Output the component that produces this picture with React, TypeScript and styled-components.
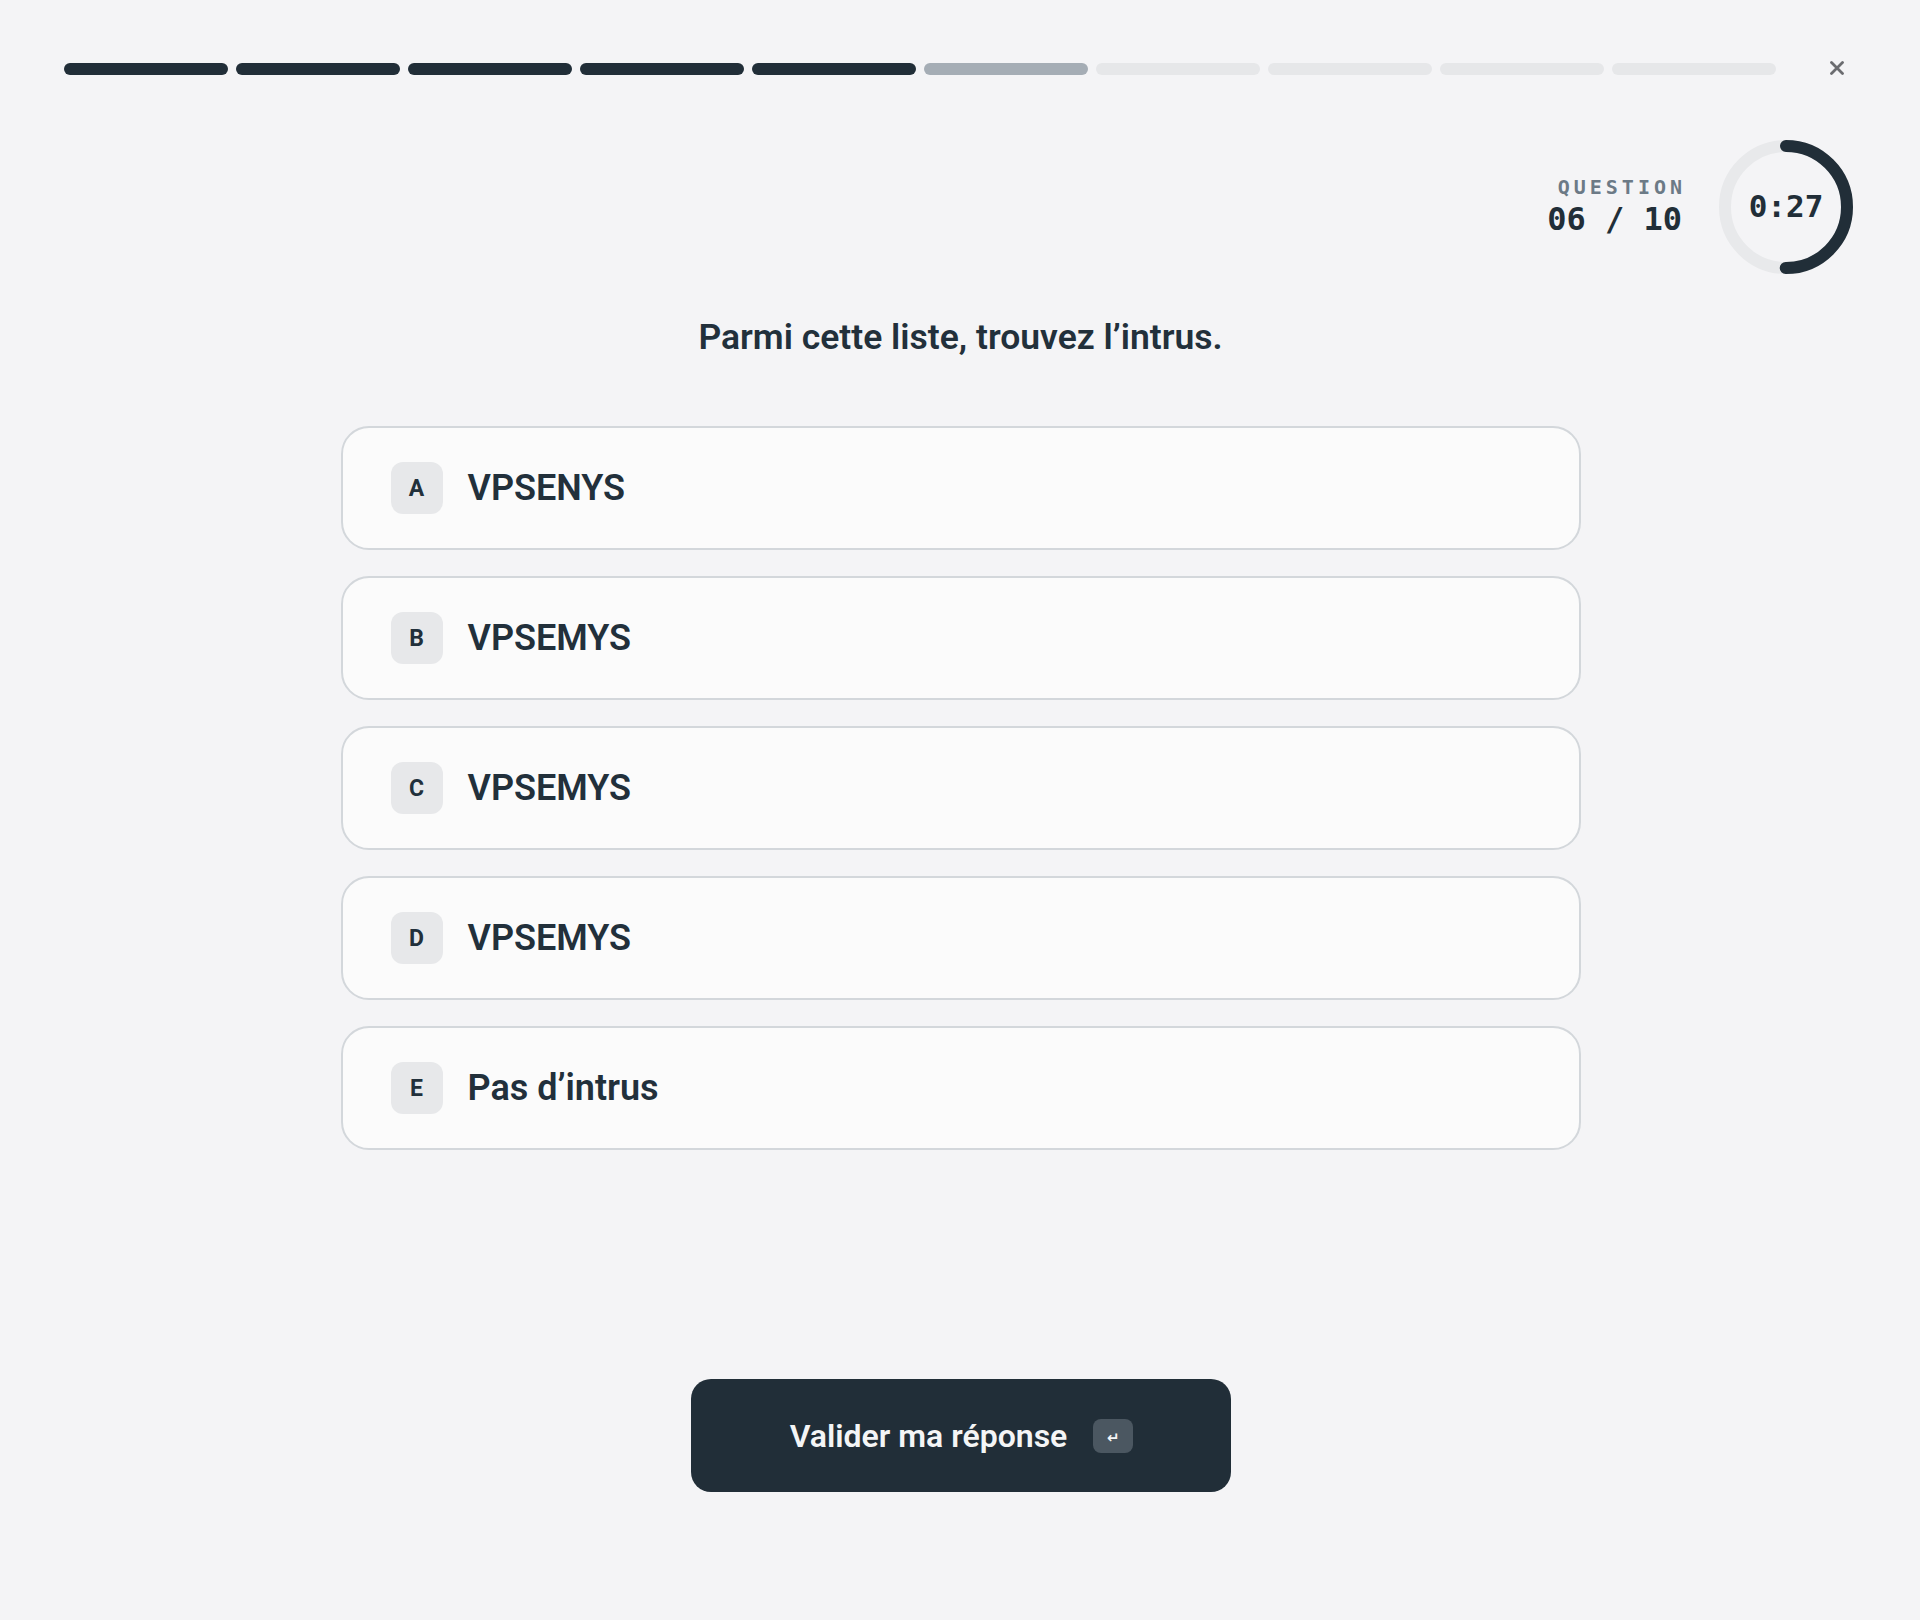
import React from "react";
import styled, { createGlobalStyle } from "styled-components";

const INK = "#212e38";

const GlobalStyle = createGlobalStyle`
  html, body {
    margin: 0;
    padding: 0;
    background: #f4f4f6;
  }
  body {
    font-family: Roboto, "Liberation Sans", Arial, sans-serif;
    color: ${INK};
  }
  * { box-sizing: border-box; }
`;

const Page = styled.div`
  min-height: 1620px;
  display: flex;
  flex-direction: column;
  padding: 48px 63px 0 64px;
`;

const Header = styled.header`
  display: flex;
  align-items: center;
  gap: 41px;
  height: 40px;
`;

const Progress = styled.div`
  flex: 1;
  display: flex;
  gap: 8px;
  padding-top: 2px;
`;

const Segment = styled.div<{ $state: "done" | "current" | "todo" }>`
  flex: 1;
  height: 12px;
  border-radius: 6px;
  background: ${(p) =>
    p.$state === "done" ? INK : p.$state === "current" ? "#a5adb5" : "#e6e7e9"};
`;

const CloseButton = styled.button`
  width: 40px;
  height: 40px;
  border: none;
  background: transparent;
  padding: 0;
  display: flex;
  align-items: center;
  justify-content: center;
  cursor: pointer;
  color: #6b6c70;
`;

const MetaRow = styled.div`
  display: flex;
  justify-content: flex-end;
  align-items: center;
  gap: 36px;
  margin-top: 51px;
  padding-right: 3px;
`;

const Counter = styled.div`
  display: flex;
  flex-direction: column;
  align-items: flex-end;
  gap: 4px;
  font-family: "DejaVu Sans Mono", "Liberation Mono", monospace;
`;

const CounterLabel = styled.div`
  font-size: 20px;
  line-height: 20px;
  font-weight: 700;
  letter-spacing: 4px;
  margin-right: -4px;
  color: #6c7a86;
`;

const CounterValue = styled.div`
  font-size: 32px;
  line-height: 36px;
  font-weight: 700;
  color: ${INK};
  white-space: pre;
`;

const Timer = styled.div`
  display: grid;
  width: 136px;
  height: 136px;
  & > * {
    grid-area: 1 / 1;
  }
`;

const TimerText = styled.div`
  display: flex;
  align-items: center;
  justify-content: center;
  font-family: "DejaVu Sans Mono", "Liberation Mono", monospace;
  font-size: 31px;
  font-weight: 700;
  color: ${INK};
  padding-bottom: 2px;
`;

const Title = styled.h1`
  margin: 41px 0 0;
  text-align: center;
  font-size: 35.5px;
  line-height: 42px;
  font-weight: 600;
  color: #22303b;
`;

const Options = styled.div`
  width: 1240px;
  margin: 68px auto 0;
  display: flex;
  flex-direction: column;
  gap: 26px;
`;

const Option = styled.button`
  height: 124px;
  display: flex;
  align-items: center;
  gap: 25px;
  padding: 0 0 0 48px;
  background: #fbfbfb;
  border: 2px solid #d3d7db;
  border-radius: 28px;
  font-family: inherit;
  text-align: left;
  cursor: pointer;
`;

const Letter = styled.span`
  width: 52px;
  height: 52px;
  border-radius: 12px;
  background: #e7e8ea;
  display: flex;
  align-items: center;
  justify-content: center;
  font-size: 23px;
  font-weight: 700;
  color: #22303b;
`;

const OptionText = styled.span`
  font-size: 36px;
  font-weight: 600;
  color: #22303b;
`;

const Footer = styled.div`
  display: flex;
  justify-content: center;
  margin-top: 229px;
`;

const Submit = styled.button`
  width: 540px;
  height: 113px;
  border: none;
  border-radius: 20px;
  background: ${INK};
  display: flex;
  align-items: center;
  justify-content: center;
  gap: 26px;
  font-family: inherit;
  font-size: 32px;
  font-weight: 600;
  color: #f4f5f6;
  cursor: pointer;
  padding: 0 0 0 2px;
`;

const Kbd = styled.span`
  width: 40px;
  height: 34px;
  border-radius: 8px;
  background: #4b5761;
  display: flex;
  align-items: center;
  justify-content: center;
  font-family: "DejaVu Sans", sans-serif;
  font-size: 15px;
  font-weight: 700;
  color: #f4f5f6;
  padding-top: 4px;
`;

const options = [
  { key: "A", label: "VPSENYS" },
  { key: "B", label: "VPSEMYS" },
  { key: "C", label: "VPSEMYS" },
  { key: "D", label: "VPSEMYS" },
  { key: "E", label: "Pas d’intrus" },
];

const R = 61;
const C = 2 * Math.PI * R;

export default function App() {
  const current = 6;
  const total = 10;
  const fraction = 0.5;
  return (
    <>
      <GlobalStyle />
      <Page>
        <Header>
          <Progress>
            {Array.from({ length: total }, (_, i) => (
              <Segment
                key={i}
                $state={i + 1 < current ? "done" : i + 1 === current ? "current" : "todo"}
              />
            ))}
          </Progress>
          <CloseButton aria-label="Fermer">
            <svg width="14" height="14" viewBox="0 0 14 14">
              <path
                d="M1.5 1.5 L12.5 12.5 M12.5 1.5 L1.5 12.5"
                stroke="currentColor"
                strokeWidth="2.8"
                strokeLinecap="round"
              />
            </svg>
          </CloseButton>
        </Header>

        <MetaRow>
          <Counter>
            <CounterLabel>QUESTION</CounterLabel>
            <CounterValue>06 / 10</CounterValue>
          </Counter>
          <Timer>
            <svg width="136" height="136" viewBox="0 0 136 136">
              <circle cx="68" cy="68" r={R} fill="none" stroke="#e8e9eb" strokeWidth="12" />
              <circle
                cx="68"
                cy="68"
                r={R}
                fill="none"
                stroke={INK}
                strokeWidth="12"
                strokeLinecap="round"
                strokeDasharray={`${C * fraction} ${C}`}
                transform="rotate(-90 68 68)"
              />
            </svg>
            <TimerText>0:27</TimerText>
          </Timer>
        </MetaRow>

        <Title>Parmi cette liste, trouvez l’intrus.</Title>

        <Options>
          {options.map((o) => (
            <Option key={o.key}>
              <Letter>{o.key}</Letter>
              <OptionText>{o.label}</OptionText>
            </Option>
          ))}
        </Options>

        <Footer>
          <Submit>
            Valider ma réponse
            <Kbd>↵</Kbd>
          </Submit>
        </Footer>
      </Page>
    </>
  );
}
